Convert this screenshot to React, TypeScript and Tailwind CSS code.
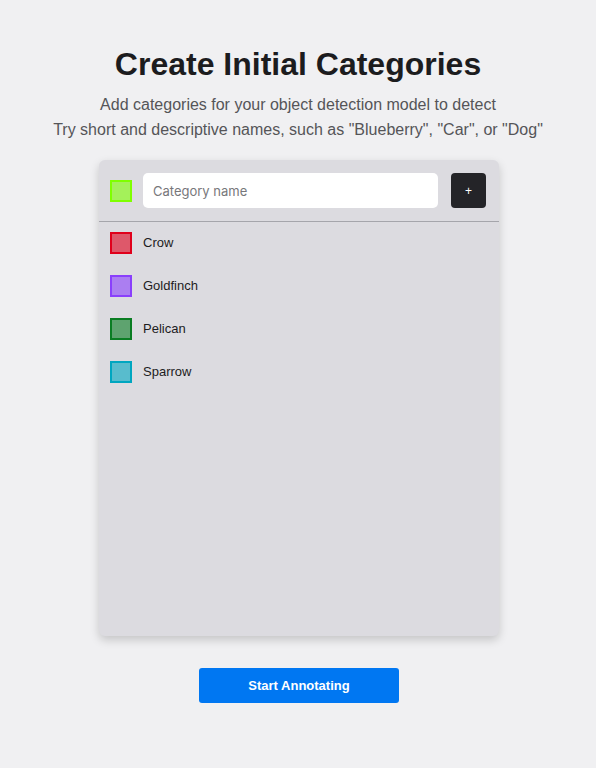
const categories = [
  { name: "Crow", border: "border-[#e0001b]", fill: "bg-[#e0001b]/60" },
  { name: "Goldfinch", border: "border-[#8a3ffc]", fill: "bg-[#8a3ffc]/60" },
  { name: "Pelican", border: "border-[#0a7d23]", fill: "bg-[#0a7d23]/60" },
  { name: "Sparrow", border: "border-[#00a6c0]", fill: "bg-[#00a6c0]/60" },
];

const Swatch = ({ border, fill }: { border: string; fill: string }) => (
  <div className={`w-[22px] h-[22px] shrink-0 border-2 ${border} ${fill}`} />
);

const App = () => {
  return (
    <main
      className="min-h-screen w-full bg-[#f0f0f2] flex flex-col items-center pt-[44px]"
      style={{ fontFamily: '"Liberation Sans", Arial, sans-serif' }}
    >
      <h1 className="text-[32px] leading-[40px] font-bold text-[#1c1c1e]">
        Create Initial Categories
      </h1>
      <div className="mt-2 text-center text-[16px] leading-[25px] text-[#555558]">
        <p>Add categories for your object detection model to detect</p>
        <p>Try short and descriptive names, such as "Blueberry", "Car", or "Dog"</p>
      </div>

      <div className="mt-[18px] ml-[2px] w-[400px] h-[476px] bg-[#dcdbe0] rounded-md shadow-[0_4px_10px_rgba(0,0,0,0.18)] flex flex-col">
        <div className="flex items-center py-[13px] pl-[11px] pr-[13px] border-b border-[#a5a5ab]">
          <Swatch border="border-[#7fff00]" fill="bg-[#7fff00]/60" />
          <input
            placeholder="Category name"
            className="ml-[11px] flex-1 h-[35px] rounded-[5px] bg-white px-[10px] text-[13px] text-[#1c1c1e] placeholder:text-[#77777b] outline-none"
            style={{ fontFamily: 'Inter, "Liberation Sans", sans-serif' }}
          />
          <button className="ml-[13px] w-[35px] h-[35px] rounded-[4px] bg-[#242428] text-white text-[12px] flex items-center justify-center">
            +
          </button>
        </div>

        <div className="flex flex-col gap-[21px] pt-[10px] px-[11px]">
          {categories.map((c) => (
            <div key={c.name} className="flex items-center gap-[11px]">
              <Swatch border={c.border} fill={c.fill} />
              <span className="text-[13px] text-[#1c1c1e]">{c.name}</span>
            </div>
          ))}
        </div>
      </div>

      <button className="mt-[32px] ml-[2px] w-[200px] h-[35px] rounded-[3px] bg-[#0077f2] text-white text-[13px] font-bold">
        Start Annotating
      </button>
    </main>
  );
};

export default App;
